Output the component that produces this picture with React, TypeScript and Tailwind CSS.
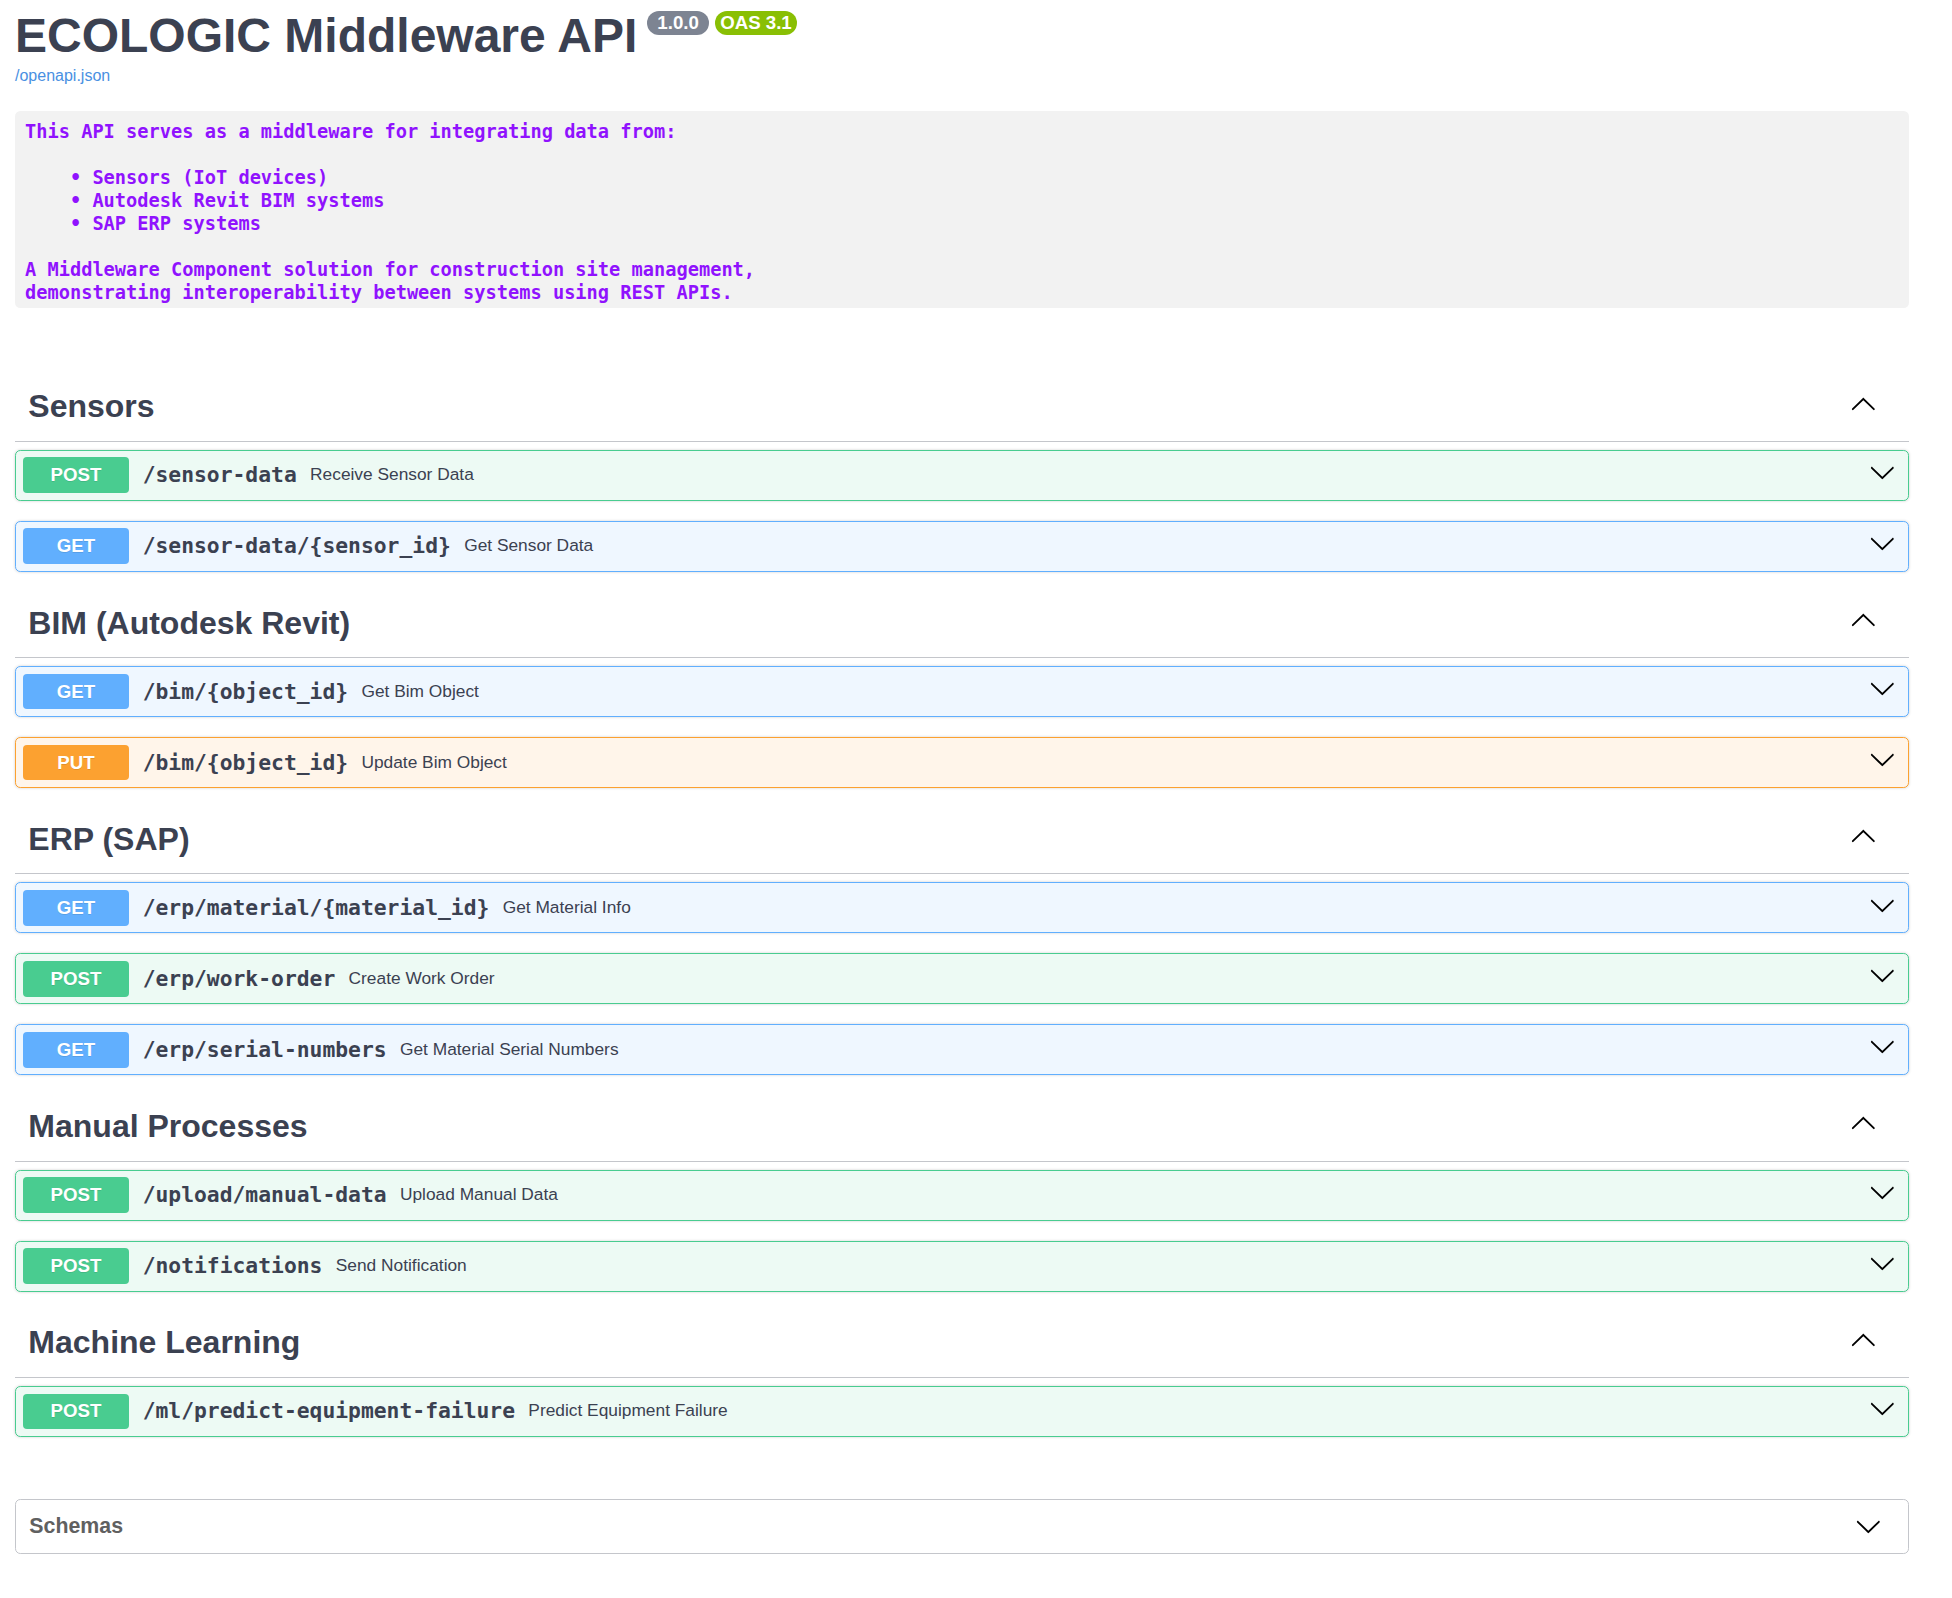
import React from "react";

type Method = "GET" | "POST" | "PUT";

const methodStyles: Record<Method, { block: string; badge: string }> = {
  GET: { block: "border-[#61affe] bg-[#eff7ff]", badge: "bg-[#61affe]" },
  POST: { block: "border-[#49cc90] bg-[#edfaf4]", badge: "bg-[#49cc90]" },
  PUT: { block: "border-[#fca130] bg-[#fff5ea]", badge: "bg-[#fca130]" },
};

const sections: { name: string; ops: { method: Method; path: string; summary: string }[] }[] = [
  {
    name: "Sensors",
    ops: [
      { method: "POST", path: "/sensor-data", summary: "Receive Sensor Data" },
      { method: "GET", path: "/sensor-data/{sensor_id}", summary: "Get Sensor Data" },
    ],
  },
  {
    name: "BIM (Autodesk Revit)",
    ops: [
      { method: "GET", path: "/bim/{object_id}", summary: "Get Bim Object" },
      { method: "PUT", path: "/bim/{object_id}", summary: "Update Bim Object" },
    ],
  },
  {
    name: "ERP (SAP)",
    ops: [
      { method: "GET", path: "/erp/material/{material_id}", summary: "Get Material Info" },
      { method: "POST", path: "/erp/work-order", summary: "Create Work Order" },
      { method: "GET", path: "/erp/serial-numbers", summary: "Get Material Serial Numbers" },
    ],
  },
  {
    name: "Manual Processes",
    ops: [
      { method: "POST", path: "/upload/manual-data", summary: "Upload Manual Data" },
      { method: "POST", path: "/notifications", summary: "Send Notification" },
    ],
  },
  {
    name: "Machine Learning",
    ops: [
      {
        method: "POST",
        path: "/ml/predict-equipment-failure",
        summary: "Predict Equipment Failure",
      },
    ],
  },
];

const description = `This API serves as a middleware for integrating data from:

    • Sensors (IoT devices)
    • Autodesk Revit BIM systems
    • SAP ERP systems

A Middleware Component solution for construction site management,
demonstrating interoperability between systems using REST APIs.`;

function ArrowDown() {
  return (
    <svg width="26.67" height="26.67" viewBox="0 0 20 20" fill="#000">
      <path d="M17.418 6.109c.272-.268.709-.268.979 0s.271.701 0 .969l-7.908 7.83c-.27.268-.707.268-.979 0l-7.908-7.83c-.27-.268-.27-.701 0-.969.271-.268.709-.268.979 0L10 13.25l7.418-7.141z" />
    </svg>
  );
}

function ArrowUp() {
  return (
    <svg width="26.67" height="26.67" viewBox="0 0 20 20" fill="#000">
      <path d="M17.418 14.908c.272.268.709.268.979 0s.271-.701 0-.969l-7.908-7.83c-.27-.268-.707-.268-.979 0l-7.908 7.83c-.27.268-.27.701 0 .969.271.268.709.268.979 0L10 7.74l7.418 7.168z" />
    </svg>
  );
}

function Operation({ method, path, summary }: { method: Method; path: string; summary: string }) {
  const style = methodStyles[method];
  return (
    <div
      className={`mb-[20px] flex items-center rounded-[5.33px] border p-[6.67px] shadow-[0_0_3px_rgba(0,0,0,0.19)] last:mb-[17.5px] ${style.block}`}
    >
      <span
        className={`flex h-[35.67px] w-[106.67px] shrink-0 items-center justify-center rounded-[4px] text-[18.67px] font-bold text-white [text-shadow:0_1px_0_rgba(0,0,0,0.1)] ${style.badge}`}
      >
        {method}
      </span>
      <span className="px-[13.33px] font-['DejaVu_Sans_Mono',monospace] text-[21.33px] font-bold text-[#3b4151]">
        {path}
      </span>
      <span className="text-[17.33px] text-[#3b4151]">{summary}</span>
      <div className="mb-[6px] ml-auto mr-[5.33px] flex">
        <ArrowDown />
      </div>
    </div>
  );
}

export default function App() {
  return (
    <div className="min-h-screen bg-white font-['Liberation_Sans',Arial,sans-serif] text-[#3b4151]">
      <div className="ml-[15px] w-[1894px] pb-[44px]">
        <div className="flex items-start pt-[8px]">
          <h2 className="text-[48px] font-bold leading-[55px] text-[#3b4151]">ECOLOGIC Middleware API</h2>
          <span className="ml-[9.5px] mt-[3px] whitespace-pre rounded-full bg-[#7d8492] px-[5.33px] py-[2.67px] text-[18.67px] font-bold leading-[18.67px] text-white">
            {" 1.0.0 "}
          </span>
          <span className="ml-[5.5px] mt-[3px] rounded-full bg-[#89bf04] px-[5.33px] py-[2.67px] text-[18.67px] font-bold leading-[18.67px] text-white">
            OAS 3.1
          </span>
        </div>
        <a className="mt-[3.5px] block text-[16px] leading-[18.4px] text-[#4990e2]">/openapi.json</a>

        <pre className="mt-[26.5px] whitespace-pre rounded-[5.33px] bg-[#f2f2f2] px-[10px] pb-[3.5px] pt-[8.6px] font-['DejaVu_Sans_Mono',monospace] text-[18.67px] font-bold leading-[23px] text-[#9012fe]">
          {description}
        </pre>

        <div className="mt-[65.5px]">
          {sections.map((section) => (
            <div key={section.name}>
              <div className="mb-[8px] flex items-center border-b border-[#c4c6cb] pb-[14.5px] pl-[13.33px] pr-[32px] pt-[13.33px]">
                <h3 className="text-[32px] font-bold leading-[40px] text-[#3b4151]">{section.name}</h3>
                <div className="mb-[7px] ml-auto flex">
                  <ArrowUp />
                </div>
              </div>
              {section.ops.map((op, index) => (
                <Operation key={index} method={op.method} path={op.path} summary={op.summary} />
              ))}
            </div>
          ))}
        </div>

        <div className="mt-[62px] flex items-center rounded-[5.33px] border border-[#c4c6cb] py-[13.33px] pl-[13.33px] pr-[26.67px]">
          <h4 className="text-[21.33px] font-bold leading-[24.5px] text-[#606060]">Schemas</h4>
          <div className="ml-auto flex">
            <ArrowDown />
          </div>
        </div>
      </div>
    </div>
  );
}
